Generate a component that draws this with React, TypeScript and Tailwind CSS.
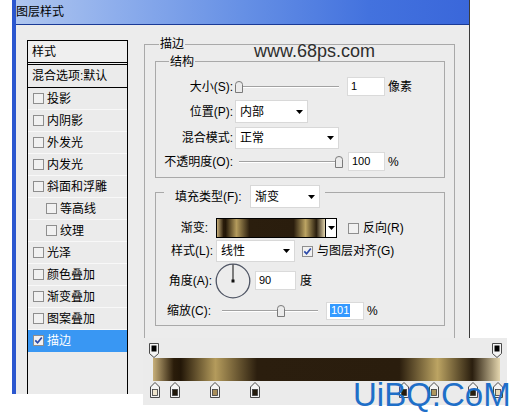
import React from "react";

const FONT = "font-['Liberation_Sans','Noto_Sans_CJK_SC',sans-serif]";

function Tri() {
  return (
    <svg width="7" height="4" viewBox="0 0 7 4" className="shrink-0">
      <path d="M0 0H7L3.5 4Z" fill="#000" />
    </svg>
  );
}

function Box({ checked = false }: { checked?: boolean }) {
  return (
    <span className="w-[11px] h-[11px] shrink-0 border border-[#8e8e8e] bg-[#f1f1f1] flex items-center justify-center">
      {checked && (
        <svg width="9" height="9" viewBox="0 0 9 9">
          <path d="M1.3 4.3 L3.6 6.8 L7.8 1.4" stroke="#2a48a8" strokeWidth="1.7" fill="none" />
        </svg>
      )}
    </span>
  );
}

function Select({ className, children }: { className: string; children: React.ReactNode }) {
  return (
    <div className={`flex items-center justify-between bg-white border border-[#d8d8d8] pl-[4px] pr-[4px] ${className}`}>
      <span>{children}</span>
      <Tri />
    </div>
  );
}

function Input({ className, children }: { className: string; children: React.ReactNode }) {
  return (
    <div className={`flex items-center bg-white border border-[#dadada] pl-[3px] text-[11px] ${className}`}>
      {children}
    </div>
  );
}

function Thumb() {
  return (
    <svg width="8" height="12" viewBox="0 0 8 12">
      <path d="M0.5 3.5 Q0.5 0.5 4 0.5 Q7.5 0.5 7.5 3.5 V11.5 H0.5 Z" fill="#ebebeb" stroke="#7a7a7a" />
    </svg>
  );
}

function Slider({ className, thumbClass }: { className: string; thumbClass: string }) {
  return (
    <div className={`relative h-[12px] ${className}`}>
      <div className="absolute left-[4px] right-0 top-[5px] h-[2px] border-t border-t-[#a2a2a2] border-b border-b-white" />
      <div className={`absolute top-0 ${thumbClass}`}>
        <Thumb />
      </div>
    </div>
  );
}

function ListItem({ label, nested = false, selected = false }: { label: string; nested?: boolean; selected?: boolean }) {
  return (
    <div
      className={`h-[22px] shrink-0 flex items-center gap-[3px] border-b ${
        selected ? "bg-[#3997f3] text-white border-b-[#3997f3]" : "border-b-[#f8f8f8]"
      } ${nested ? "pl-[18px]" : "pl-[5px]"}`}
    >
      <Box checked={selected} />
      <span>{label}</span>
    </div>
  );
}

const GRAD =
  "bg-[linear-gradient(to_right,#c8b07a_0%,#2a1c0a_6%,#231708_8%,#b49b5c_18%,#2b1e0e_30%,#2a1d0d_71%,#bca463_82%,#2a1e0e_92%,#e4d6ae_100%)]";

function BottomStop({ className, color }: { className: string; color: string }) {
  return (
    <div className={`absolute top-[44px] ${className}`}>
      <svg width="10" height="16" viewBox="0 0 10 16">
        <path d="M0.5 5 L5 0.5 L9.5 5 V15.5 H0.5 Z" fill="#f4f4f4" stroke="#4a4a4a" />
        <rect x="2.5" y="7.5" width="5" height="6" fill={color} stroke="#3a3a3a" strokeWidth="0.8" />
      </svg>
    </div>
  );
}

function TopStop({ className }: { className: string }) {
  return (
    <div className={`absolute top-[5px] ${className}`}>
      <svg width="10" height="15" viewBox="0 0 10 15">
        <path d="M0.5 0.5 H9.5 V10.5 L5 14.5 L0.5 10.5 Z" fill="#f4f4f4" stroke="#4a4a4a" />
        <rect x="2.5" y="2.5" width="5" height="6" fill="#000" />
      </svg>
    </div>
  );
}

export default function App() {
  return (
    <div className={`relative w-[524px] h-[419px] overflow-hidden bg-white text-[12px] leading-none text-black ${FONT}`}>
      {/* dialog window */}
      <div className="ml-[12px] w-[458px] h-[394px] flex flex-col border-l-4 border-l-[#2b57cf] border-r border-r-[#3c3c3c]">
        <div className="h-[25px] shrink-0 border-b border-b-[#1a3a96] bg-[linear-gradient(to_right,#afc6ef_0%,#8eaeec_22%,#6690e5_50%,#4372de_78%,#3a67da_100%)] flex items-center">
          <span className="text-[12px] text-black">图层样式</span>
        </div>
        <div className="flex-1 bg-[#ececec] flex pt-[15px]">
          {/* styles list */}
          <div className="ml-[11px] w-[101px] border-x border-t border-black flex flex-col bg-[#ebebeb]">
            <div className="h-[24px] shrink-0 border-b-[3px] border-double border-b-black flex items-center pl-[4px] bg-[#efefef]">
              样式
            </div>
            <div className="h-[23px] shrink-0 border-b border-b-black flex items-center pl-[4px]">混合选项:默认</div>
            <ListItem label="投影" />
            <ListItem label="内阴影" />
            <ListItem label="外发光" />
            <ListItem label="内发光" />
            <ListItem label="斜面和浮雕" />
            <ListItem label="等高线" nested />
            <ListItem label="纹理" nested />
            <ListItem label="光泽" />
            <ListItem label="颜色叠加" />
            <ListItem label="渐变叠加" />
            <ListItem label="图案叠加" />
            <ListItem label="描边" selected />
          </div>

          {/* stroke group */}
          <div className="relative ml-[16px] mt-[4px] mb-[3px] w-[311px] border border-[#a9a9a9] flex flex-col">
            <span className="absolute left-[14px] top-[-7px] px-[1px] bg-[#ececec] leading-[12px]">描边</span>

            {/* structure */}
            <div className="relative ml-[10px] mt-[16px] w-[290px] h-[117px] shrink-0 border border-[#a9a9a9] flex flex-col">
              <span className="absolute left-[13px] top-[-6px] px-[1px] bg-[#ececec] leading-[12px]">结构</span>
              <div className="mt-[15px] h-[19px] flex items-center">
                <span className="w-[77px] text-right">大小(S):</span>
                <Slider className="ml-[2px] w-[104px]" thumbClass="left-0" />
                <Input className="ml-[8px] w-[38px] h-[19px]">1</Input>
                <span className="ml-[3px]">像素</span>
              </div>
              <div className="mt-[4px] h-[23px] flex items-center">
                <span className="w-[77px] text-right">位置(P):</span>
                <Select className="ml-[2px] w-[73px] h-[23px]">内部</Select>
              </div>
              <div className="mt-[4px] h-[22px] flex items-center">
                <span className="w-[77px] text-right">混合模式:</span>
                <Select className="ml-[2px] w-[104px] h-[22px]">正常</Select>
              </div>
              <div className="mt-[3px] h-[19px] flex items-center">
                <span className="w-[77px] text-right">不透明度(O):</span>
                <Slider className="ml-[2px] w-[108px]" thumbClass="left-[100px]" />
                <Input className="ml-[5px] w-[37px] h-[19px]">100</Input>
                <span className="ml-[3px]">%</span>
              </div>
            </div>

            {/* fill */}
            <div className="relative ml-[10px] mt-[14px] w-[290px] h-[134px] shrink-0 border border-[#a9a9a9] flex flex-col">
              <div className="absolute left-[8px] top-[-8px] h-[23px] flex items-center bg-[#ececec] pl-[11px] pr-[5px]">
                <span className="w-[75px]">填充类型(F):</span>
                <Select className="w-[70px] h-[23px]">渐变</Select>
              </div>
              <div className="mt-[25px] h-[20px] flex items-center">
                <span className="w-[52px] text-right">渐变:</span>
                <div className={`ml-[8px] w-[110px] h-[20px] border border-black ${GRAD}`} />
                <div className="w-[11px] h-[20px] border-y border-r border-black bg-white flex items-center justify-center">
                  <Tri />
                </div>
                <span className="ml-[11px]">
                  <Box />
                </span>
                <span className="ml-[4px]">反向(R)</span>
              </div>
              <div className="mt-[2px] h-[22px] flex items-center">
                <span className="w-[57px] text-right">样式(L):</span>
                <Select className="ml-[3px] w-[79px] h-[22px]">线性</Select>
                <span className="ml-[7px]">
                  <Box checked />
                </span>
                <span className="ml-[4px]">与图层对齐(G)</span>
              </div>
              <div className="mt-[1px] h-[35px] flex items-center">
                <span className="w-[56px] text-right">角度(A):</span>
                <svg width="36" height="36" viewBox="0 0 36 36" className="ml-[3px]">
                  <circle cx="18" cy="18" r="16.8" fill="none" stroke="#505665" strokeWidth="1.3" />
                  <line x1="18" y1="18" x2="18" y2="1.5" stroke="#222" strokeWidth="1.1" />
                  <rect x="16.5" y="16.5" width="3" height="3" fill="#111" />
                </svg>
                <Input className="ml-[4px] w-[41px] h-[19px]">90</Input>
                <span className="ml-[4px]">度</span>
              </div>
              <div className="mt-[3px] h-[19px] flex items-center">
                <span className="w-[55px] text-right">缩放(C):</span>
                <Slider className="ml-[7px] w-[100px]" thumbClass="left-[59px]" />
                <Input className="ml-[8px] w-[38px] h-[18px]">
                  <span className="bg-[#3399ff] text-white px-[1px] leading-[13px]">101</span>
                </Input>
                <span className="ml-[3px]">%</span>
              </div>
            </div>
          </div>
        </div>
      </div>

      {/* watermark top */}
      <span className="absolute left-[254px] top-[42px] text-[18px] leading-[18px] text-[#2e2e2e] font-['Liberation_Sans',sans-serif]">
        www.68ps.com
      </span>

      {/* gradient editor strip */}
      <div className="absolute left-[143px] top-[338px] w-[364px] h-[67px] bg-[#ebebeb]">
        <TopStop className="left-[6px]" />
        <TopStop className="left-[349px]" />
        <div className={`absolute left-[10px] top-[20px] w-[347px] h-[23px] ${GRAD}`} />
        <BottomStop className="left-[7px]" color="#efe6cf" />
        <BottomStop className="left-[27px]" color="#1e1608" />
        <BottomStop className="left-[67px]" color="#a88e5a" />
        <BottomStop className="left-[107px]" color="#231a0c" />
        <BottomStop className="left-[256px]" color="#241a0c" />
        <BottomStop className="left-[286px]" color="#ae965c" />
        <BottomStop className="left-[325px]" color="#2a1f10" />
        <BottomStop className="left-[350px]" color="#e6dab8" />
      </div>

      {/* watermark bottom */}
      <span className="absolute left-[353px] top-[378px] text-[33px] leading-[33px] text-[#1f6fc8] font-['Liberation_Sans',sans-serif]">
        UiBQ.CoM
      </span>
    </div>
  );
}
